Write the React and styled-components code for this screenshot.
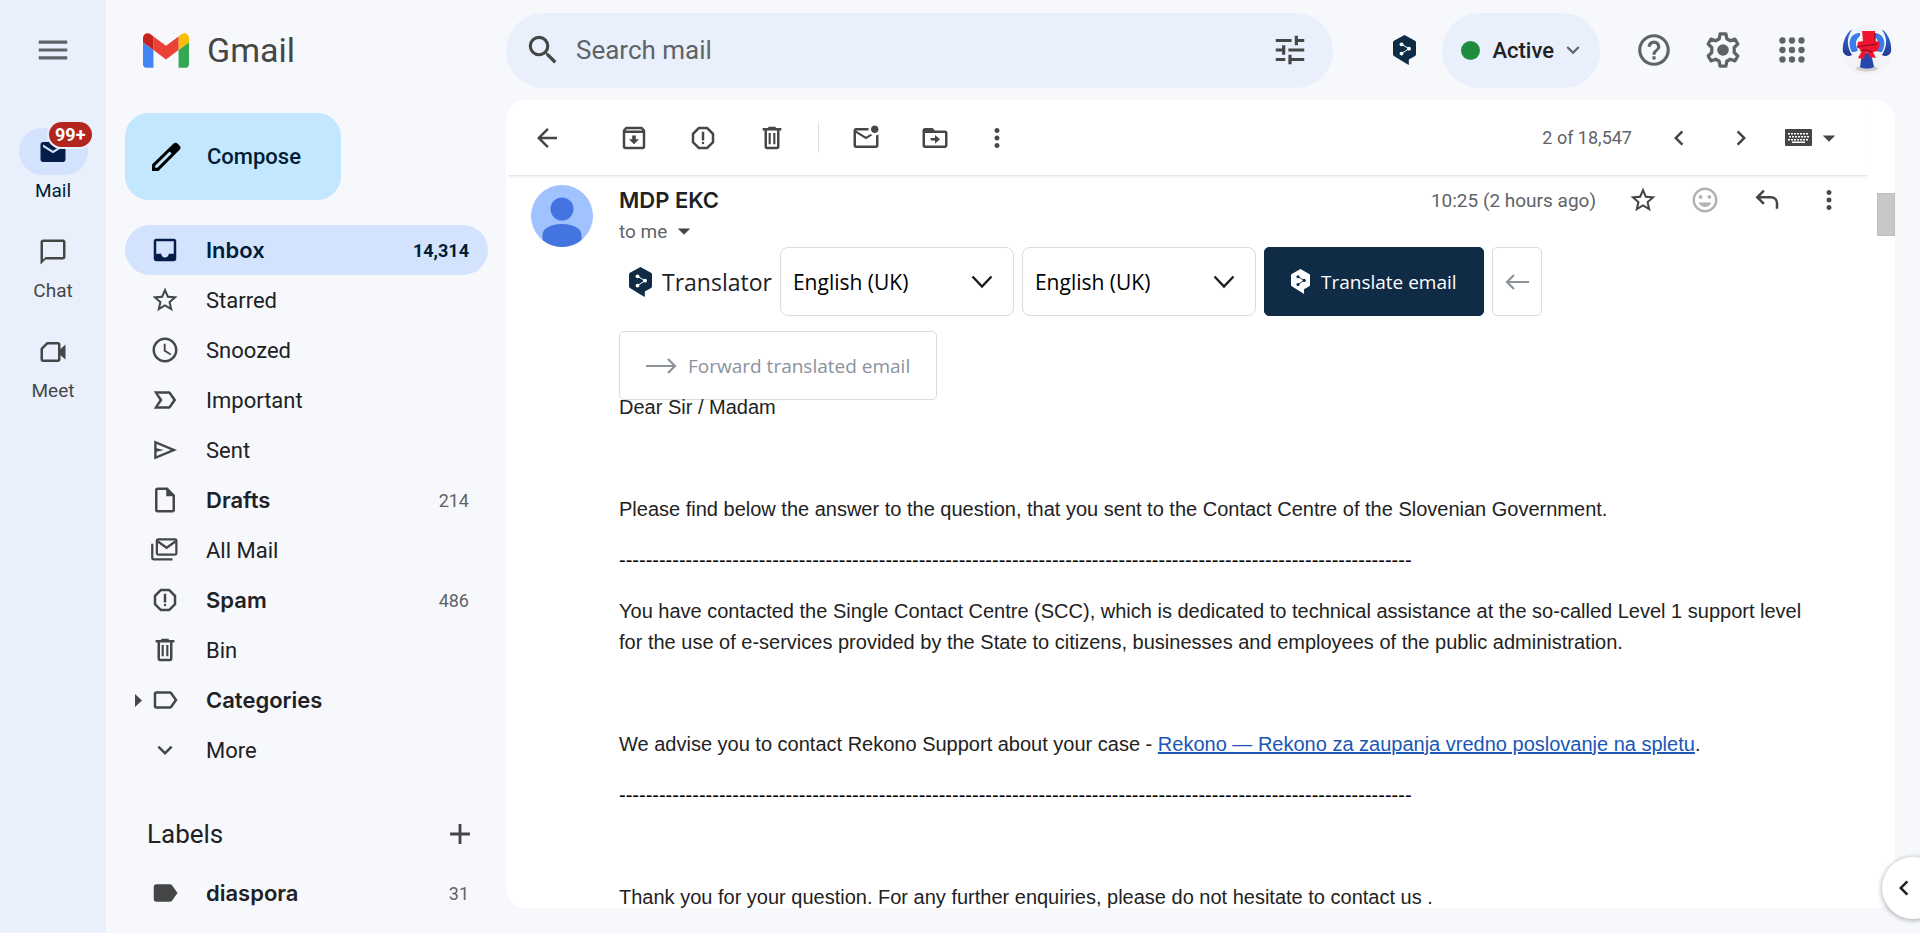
import React from "react";
import styled, { createGlobalStyle, css } from "styled-components";
import {
  MdAccessTime,
  MdAdd,
  MdArrowBack,
  MdArrowDropDown,
  MdChatBubbleOutline,
  MdChevronLeft,
  MdChevronRight,
  MdHelpOutline,
  MdInbox,
  MdKeyboardArrowDown,
  MdLabel,
  MdLabelImportantOutline,
  MdLabelOutline,
  MdMail,
  MdMenu,
  MdMoreVert,
  MdOutlineArchive,
  MdOutlineInsertDriveFile,
  MdOutlineMarkEmailUnread,
  MdOutlineReport,
  MdSearch,
  MdStarBorder,
  MdTagFaces,
  MdTune
} from "react-icons/md";

const GlobalStyle = createGlobalStyle`
  * {
    box-sizing: border-box;
  }
  body {
    margin: 0;
    background: #f6f8fc;
    color: #202124;
    font-family: Roboto, "Liberation Sans", sans-serif;
    font-size: 22px;
    overflow: hidden;
  }
  button, input, select {
    font: inherit;
    color: inherit;
  }
  a {
    color: inherit;
    text-decoration: none;
  }
  svg {
    display: block;
    flex-shrink: 0;
  }
`;

/* ---------- icons ---------- */

const MeetIcon = () => (
  <svg width="30" height="30" viewBox="0 0 24 24" fill="currentColor">
    <path d="M16 4H7L2 9v9c0 1.100.9 2 2 2h12c1.100 0 2-.9 2-2v-3.500l4 3.500V6l-4 3.500V6c0-1.100-.9-2-2-2zm0 14H4V9.800L7.800 6H16v12z" />
  </svg>
);

const SentIcon = () => (
  <svg width="30" height="30" viewBox="0 0 25 25" fill="currentColor">
    <path d="M3.500 20.500v-16l19 8zm2-3l11.850-5-11.850-5v3.500l6 1.500-6 1.500z" />
  </svg>
);

const AllMailIcon = () => (
  <svg width="30" height="30" viewBox="0 0 24 24" fill="none" stroke="currentColor" strokeWidth="1.800">
    <rect x="5.500" y="3.400" width="15.600" height="12.200" rx="1" />
    <path d="M6 5l7.300 5.200L20.600 5" />
    <path d="M1.800 7v11.400a1 1 0 0 0 1 1H18" />
  </svg>
);

const BinIcon = () => (
  <svg width="30" height="30" viewBox="0 0 24 24" fill="currentColor">
    <path d="M15 4V3H9v1H4.500v2H6v13c0 1.100.9 2 2 2h8c1.100 0 2-.9 2-2V6h1.500V4H15zm1 15H8V6h8v13z" />
    <path d="M9.300 8h1.700v9H9.300zM13 8h1.700v9H13z" />
  </svg>
);

const MoveIcon = () => (
  <svg width="30" height="30" viewBox="0 0 24 24" fill="currentColor">
    <path d="M20 6h-8l-2-2H4c-1.100 0-2 .9-2 2v12c0 1.100.9 2 2 2h16c1.100 0 2-.9 2-2V8c0-1.100-.9-2-2-2zm0 12H4V8h16z" />
    <path d="M12 16.500v-2.500H8.500v-2H12V9.500l4 3.500z" />
  </svg>
);

const PenIcon = () => (
  <svg width="30" height="30" viewBox="0 0 30 30" fill="#000">
    <path d="M22.600 1.600 1 22.600V29h6.400L28.400 8c1.500-1.500 1.500-3 0-4.400l-1.900-2c-1.300-1.300-2.700-1.200-3.900 0zM6.300 25.800H4.200v-2L18.600 9.400l2 2z" />
  </svg>
);

const ReplyIcon = () => (
  <svg width="30" height="30" viewBox="0 0 24 24" fill="none" stroke="currentColor" strokeWidth="2">
    <path d="M9.500 4.500 4.200 9.800l5.300 5.300M4.500 9.800H15c3 0 5 2 5 5V19" />
  </svg>
);

const GearIcon = () => (
  <svg width="38" height="38" viewBox="1.500 1.500 21 21">
    <path
      d="M10.400 3.100h3.200l.5 2.700 1.900 1.100 2.600-.9 1.600 2.700-2 1.900v2.800l2 1.900-1.600 2.700-2.600-.9-1.900 1.100-.5 2.700h-3.200l-.5-2.700L8 17.100l-2.600.9-1.600-2.700 2-1.900v-2.800l-2-1.900L5.400 6l2.600.9 1.900-1.100z"
      fill="none"
      stroke="currentColor"
      strokeWidth="1.800"
      strokeLinejoin="round"
    />
    <circle cx="12" cy="12" r="3.200" fill="currentColor" />
  </svg>
);

const AppsIcon = () => (
  <svg width="38" height="38" viewBox="0 0 24 24" fill="currentColor">
    {[6, 12, 18].map(y => [6, 12, 18].map(x => <circle key={`${x}-${y}`} cx={x} cy={y} r="2" />))}
  </svg>
);

const KeyboardIcon = () => (
  <svg width="27" height="17" viewBox="0 0 27 17">
    <rect width="27" height="17" rx="1" fill="#444746" />
    {[4, 7, 10].map(y =>
      [3, 6, 9, 12, 15, 18, 21].map(x => (
        <rect key={`${x}-${y}`} x={x + (y === 7 ? 1 : 0)} y={y} width="2" height="1.500" fill="#fff" />
      ))
    )}
    <rect x="7" y="12.500" width="13" height="1.500" fill="#fff" />
  </svg>
);

const HexIcon = ({ width, fill = "#0f2b46", dots = "#fff" }) => (
  <svg width={width} height={Math.round(width * 1.3)} viewBox="0 0 23 30">
    <path
      d="M11.500 0 22 5.800c.7.400 1 .9 1 1.600v11.900c0 .7-.3 1.200-.9 1.600L15.800 24.500V30l-5.200-3.100L.9 20.900c-.6-.4-.9-.9-.9-1.600V7.400c0-.7.3-1.200.9-1.600z"
      fill={fill}
    />
    <path d="M8.500 9.300 16 13.700 8.500 18.600" fill="none" stroke={dots} strokeWidth="1" />
    <circle cx="8.500" cy="9.300" r="1.900" fill={dots} />
    <circle cx="16" cy="13.700" r="1.900" fill={dots} />
    <circle cx="8.500" cy="18.600" r="1.900" fill={dots} />
  </svg>
);

const GmailLogo = () => (
  <svg width="46" height="35" viewBox="52 42 88 66">
    <path fill="#4285f4" d="M58 108h14V74L52 59v43c0 3.320 2.690 6 6 6" />
    <path fill="#34a853" d="M120 108h14c3.320 0 6-2.690 6-6V59l-20 15" />
    <path fill="#fbbc04" d="M120 48v26l20-15v-8c0-7.420-8.470-11.650-14.400-7.200" />
    <path fill="#ea4335" d="M72 74V48l24 18 24-18v26L96 92" />
    <path fill="#c5221f" d="M52 51v8l20 15V48l-5.600-4.200c-5.940-4.450-14.400-.22-14.400 7.200" />
  </svg>
);

const PersonAvatar = () => (
  <svg width="62" height="62" viewBox="0 0 62 62">
    <circle cx="31" cy="31" r="31" fill="#a0c3ff" />
    <circle cx="31" cy="24" r="11.500" fill="#4374e0" />
    <path d="M11.500 55v-5c0-7 9-11 19.500-11s19.500 4 19.500 11v5A31 31 0 0 1 31 62a31 31 0 0 1-19.500-7z" fill="#4374e0" />
  </svg>
);

const UserPicture = () => (
  <svg width="50" height="50" viewBox="0 0 50 50">
    <defs>
      <linearGradient id="blue" x1="0" y1="0" x2="0" y2="1">
        <stop offset="0" stopColor="#2f6fe0" />
        <stop offset="1" stopColor="#22398f" />
      </linearGradient>
    </defs>
    <circle cx="25" cy="25" r="25" fill="#f3f3f5" />
    <ellipse cx="25" cy="43.500" rx="11" ry="3" fill="#d3cdd2" />
    <path d="M9 5C3 10 0 19 1 27c2 4 6 5 9 3C5 22 4 13 10 5zM41 5c6 5 9 14 8 22-2 4-6 5-9 3 5-8 6-17 0-25z" fill="url(#blue)" />
    <path d="M18 8C8 8 5 18 10 27c2 0 4 0 6-2-3-5-3-10 2-14zM32 8c10 0 13 10 8 19-2 0-4 0-6-2 3-5 3-10-2-14z" fill="#3b7ce8" />
    <path d="M20 28h9l3 14c-4 2-10 2-14 0z" fill="#2848ad" />
    <path d="M20 6h13v10l5 1-2 9-5 1 3 6-6-1-3-5-4 7-5-1 4-7-5-4 1-5 5-1z" fill="#f0142f" />
    <path d="M15 22l20-3M18 26l6-1 6 2M33 8v8" stroke="#7d0d1c" strokeWidth="1.200" fill="none" />
  </svg>
);

const LongArrow = ({ width, back }) => (
  <svg width={width} height="16" viewBox={`0 0 ${width} 16`} fill="none" stroke="#8a929c" strokeWidth="2.200">
    {back ? (
      <path d={`M9 1 2 8l7 7M2 8h${width - 2}`} />
    ) : (
      <path d={`M${width - 9} 1l7 7-7 7M${width - 2} 8H0`} />
    )}
  </svg>
);

/* ---------- shell ---------- */

const Page = styled.div`
  display: flex;
  height: 100vh;
  overflow: hidden;
`;

const Rail = styled.nav`
  display: flex;
  flex-direction: column;
  align-items: center;
  width: 106px;
  flex-shrink: 0;
  background: #e9f0fb;
  color: #444746;
`;

const IconButton = styled.button`
  display: flex;
  align-items: center;
  justify-content: center;
  padding: 0;
  border: 0;
  background: none;
  color: ${props => props.$color || "#444746"};
  cursor: pointer;
`;

const RailMenu = styled(IconButton)`
  height: 100px;
  margin-bottom: 28px;
`;

const RailItem = styled.a`
  display: flex;
  flex-direction: column;
  align-items: center;
  height: 100px;
  font-size: 19px;
  line-height: 31px;
  color: ${props => (props.$active ? "#001d35" : "#444746")};
`;

const RailPill = styled.span`
  position: relative;
  display: flex;
  align-items: center;
  justify-content: center;
  width: 69px;
  height: 47px;
  border-radius: 24px;
  background: ${props => (props.$active ? "#d3e3fd" : "transparent")};
`;

const Badge = styled.span`
  position: absolute;
  top: -8px;
  right: -6px;
  padding: 0 6px;
  border: 2px solid #e9f0fb;
  border-radius: 15px;
  background: #b3261e;
  color: #fff;
  font-size: 18px;
  font-weight: 700;
  line-height: 25px;
`;

const Content = styled.div`
  display: flex;
  flex-direction: column;
  flex: 1;
  min-width: 0;
`;

const TopBar = styled.header`
  display: flex;
  align-items: center;
  height: 100px;
  flex-shrink: 0;
  padding-right: 28px;
`;

const Brand = styled.a`
  display: flex;
  align-items: center;
  gap: 18px;
  width: 400px;
  flex-shrink: 0;
  padding-left: 37px;
  color: #444746;
  font-size: 34px;
`;

const SearchBar = styled.form`
  display: flex;
  align-items: center;
  gap: 14px;
  flex: 1;
  height: 75px;
  padding: 0 24px 0 18px;
  border-radius: 38px;
  background: #e9f0fb;
`;

const SearchInput = styled.input`
  flex: 1;
  min-width: 0;
  padding: 0;
  border: 0;
  outline: 0;
  background: none;
  font-size: 26px;
  &::placeholder {
    color: #5f6368;
    opacity: 1;
  }
`;

const TopActions = styled.div`
  display: flex;
  align-items: center;
  gap: 31px;
  margin-left: 35px;
`;

const StatusButton = styled.button`
  display: flex;
  align-items: center;
  gap: 12px;
  height: 75px;
  margin-left: 26px;
  padding: 0 14px 0 19px;
  border: 0;
  border-radius: 38px;
  background: #e9f0fb;
  font-weight: 500;
`;

const StatusDot = styled.span`
  width: 19px;
  height: 19px;
  border-radius: 50%;
  background: #1e8e3e;
`;

const StatusText = styled.span`
  display: flex;
  align-items: center;
  gap: 6px;
`;

const Extension = styled(IconButton)`
  margin-left: 60px;
`;

const Columns = styled.div`
  display: flex;
  flex: 1;
  min-height: 0;
`;

/* ---------- sidebar ---------- */

const Sidebar = styled.aside`
  width: 400px;
  flex-shrink: 0;
  padding: 13px 18px 0 19px;
`;

const Compose = styled.button`
  display: flex;
  align-items: center;
  gap: 26px;
  height: 87px;
  margin-bottom: 25px;
  padding: 0 40px 0 26px;
  border: 0;
  border-radius: 24px;
  background: #c2e7ff;
  color: #001d35;
  font-weight: 500;
`;

const FolderList = styled.ul`
  margin: 0;
  padding: 0;
  list-style: none;
`;

const boldLabel = css`
  font-family: Inter, Roboto, sans-serif;
  font-size: 22px;
  font-weight: 600;
`;

const FolderLink = styled.a`
  display: flex;
  align-items: center;
  height: 50px;
  padding-right: 19px;
  border-radius: 25px;
  background: ${props => (props.$active ? "#d3e3fd" : "transparent")};
  color: ${props => (props.$active ? "#001d35" : "#202124")};
  svg {
    color: ${props => (props.$active ? "#041e49" : "#444746")};
  }
`;

const FolderExpander = styled.span`
  display: flex;
  justify-content: flex-end;
  width: 25px;
  padding-right: 8px;
`;

const FolderName = styled.span`
  flex: 1;
  padding-left: 26px;
  ${props => props.$bold && boldLabel}
`;

const FolderCount = styled.span`
  color: ${props => (props.$active ? "#001d35" : "#5f6368")};
  font-size: 18px;
  font-weight: ${props => (props.$active ? 700 : 400)};
`;

const LabelsHeader = styled.div`
  display: flex;
  align-items: center;
  justify-content: space-between;
  height: 50px;
  margin: 34px 0 9px;
  padding: 0 11px 0 22px;
`;

const LabelsTitle = styled.h2`
  margin: 0;
  font-size: 26px;
  font-weight: 400;
`;

/* ---------- mail card ---------- */

const Card = styled.main`
  display: flex;
  flex-direction: column;
  flex: 1;
  min-width: 0;
  margin: 0 25px 25px 0;
  border-radius: 20px;
  background: #fff;
  overflow: hidden;
`;

const Toolbar = styled.div`
  display: flex;
  align-items: center;
  height: 76px;
  flex-shrink: 0;
  margin: 0 28px 0 2px;
  padding: 0 23px 0 24px;
  border-bottom: 1px solid #e4e6e8;
  box-shadow: 0 2px 2px -1px rgba(0, 0, 0, 0.08);
`;

const ToolGroup = styled.div`
  display: flex;
  align-items: center;
  gap: ${props => props.$gap}px;
`;

const Separator = styled.span`
  width: 1px;
  height: 31px;
  margin: 0 32px 0 31px;
  background: #dfe2e5;
`;

const Pager = styled.div`
  display: flex;
  align-items: center;
  gap: 32px;
  margin-left: auto;
  color: #5f6368;
  font-size: 18px;
`;

const InputTools = styled(IconButton)`
  margin-left: -3px;
  gap: 2px;
`;

const Scroller = styled.div`
  display: flex;
  flex: 1;
  min-height: 0;
`;

const Message = styled.article`
  display: flex;
  align-items: flex-start;
  gap: 26px;
  flex: 1;
  min-width: 0;
  padding: 9px 33px 0 25px;
`;

const MessageMain = styled.div`
  flex: 1;
  min-width: 0;
`;

const MessageHeader = styled.div`
  display: flex;
  align-items: center;
  justify-content: space-between;
  height: 30px;
`;

const Sender = styled.h3`
  margin: 0;
  ${boldLabel}
`;

const HeaderActions = styled.div`
  display: flex;
  align-items: center;
  gap: 32px;
  color: #5f6368;
  font-size: 19px;
`;

const Recipient = styled.button`
  display: flex;
  align-items: center;
  gap: 2px;
  height: 32px;
  padding: 0;
  border: 0;
  background: none;
  color: #5f6368;
  font-size: 19px;
`;

const TranslateBar = styled.div`
  display: flex;
  flex-wrap: wrap;
  align-items: center;
  gap: 15px 8px;
  font-family: "Open Sans", "Noto Sans", sans-serif;
  font-size: 19px;
`;

const TranslateBrand = styled.div`
  display: flex;
  align-items: center;
  gap: 10px;
  padding-left: 10px;
  font-size: 23px;
`;

const SelectBox = styled.div`
  display: grid;
  align-items: center;
  width: 234px;
  height: 69px;
  border: 1px solid #dadce0;
  border-radius: 8px;
  select,
  svg {
    grid-area: 1 / 1;
  }
  svg {
    justify-self: end;
    margin-right: 20px;
    pointer-events: none;
  }
`;

const LanguageSelect = styled.select`
  appearance: none;
  height: 100%;
  padding: 0 12px;
  border: 0;
  background: none;
  color: #000;
  font-size: 21px;
`;

const TranslateButton = styled.button`
  display: flex;
  align-items: center;
  gap: 11px;
  height: 69px;
  padding: 0 26px;
  border: 1px solid ${props => (props.$primary ? "#0f2b46" : "#dadce0")};
  border-radius: 5px;
  background: ${props => (props.$primary ? "#0f2b46" : "#fff")};
  color: ${props => (props.$primary ? "#fff" : "#8a929c")};
`;

const BackButton = styled(TranslateButton)`
  padding: 0 12px;
`;

const Body = styled.div`
  margin-top: -8px;
  padding-right: 20px;
  color: #222;
  font-family: "Liberation Sans", Arial, sans-serif;
  font-size: 20px;
  line-height: 31px;
  p {
    min-height: 31px;
    margin: 0 0 20px;
  }
  a {
    color: #1a56b8;
    text-decoration: underline;
  }
`;

const Dashes = styled.p`
  color: #000;
  white-space: nowrap;
`;

const Scrollbar = styled.div`
  width: 18px;
  padding-top: 17px;
`;

const Thumb = styled.div`
  height: 43px;
  border: 1px solid #bdbdbd;
  background: #c8c8c8;
`;

const SidePanelToggle = styled.button`
  position: fixed;
  right: -24px;
  bottom: 14px;
  display: flex;
  align-items: center;
  width: 62px;
  height: 62px;
  padding: 0 0 0 7px;
  border: 0;
  border-radius: 31px;
  background: #fff;
  color: #1f1f1f;
  box-shadow: 0 1px 4px 1px rgba(60, 64, 67, 0.35);
`;

/* ---------- data ---------- */

const folders = [
  { name: "Inbox", icon: <MdInbox size={30} />, count: "14,314", bold: true, active: true },
  { name: "Starred", icon: <MdStarBorder size={30} /> },
  { name: "Snoozed", icon: <MdAccessTime size={30} /> },
  { name: "Important", icon: <MdLabelImportantOutline size={30} /> },
  { name: "Sent", icon: <SentIcon /> },
  { name: "Drafts", icon: <MdOutlineInsertDriveFile size={30} />, count: "214", bold: true },
  { name: "All Mail", icon: <AllMailIcon /> },
  { name: "Spam", icon: <MdOutlineReport size={30} />, count: "486", bold: true },
  { name: "Bin", icon: <BinIcon /> },
  { name: "Categories", icon: <MdLabelOutline size={30} />, bold: true, expandable: true },
  { name: "More", icon: <MdKeyboardArrowDown size={30} /> }
];

const labels = [{ name: "diaspora", icon: <MdLabel size={30} />, count: "31", bold: true }];

const dashes = "-".repeat(119);

/* ---------- components ---------- */

const Folder = ({ name, icon, count, bold, active, expandable }) => (
  <li>
    <FolderLink href="#" $active={active}>
      <FolderExpander>
        {expandable && (
          <svg width="7" height="13" viewBox="0 0 7 13" fill="currentColor">
            <path d="M0 0l7 6.500L0 13z" />
          </svg>
        )}
      </FolderExpander>
      {icon}
      <FolderName $bold={bold}>{name}</FolderName>
      {count && <FolderCount $active={active}>{count}</FolderCount>}
    </FolderLink>
  </li>
);

const Language = ({ label }) => (
  <SelectBox>
    <LanguageSelect aria-label={label} defaultValue="en-GB">
      <option value="en-GB">English (UK)</option>
      <option value="sl">Slovenian</option>
    </LanguageSelect>
    <svg width="22" height="14" viewBox="0 0 22 14" fill="none" stroke="#1b1b1b" strokeWidth="2.400">
      <path d="M1.500 1.500 11 11.500l9.500-10" />
    </svg>
  </SelectBox>
);

const MailRail = () => (
  <Rail>
    <RailMenu aria-label="Main menu" $color="#5f6368">
      <MdMenu size={38} />
    </RailMenu>
    <RailItem href="#" $active>
      <RailPill $active>
        <MdMail size={30} color="#041e49" />
        <Badge>99+</Badge>
      </RailPill>
      Mail
    </RailItem>
    <RailItem href="#">
      <RailPill>
        <MdChatBubbleOutline size={30} />
      </RailPill>
      Chat
    </RailItem>
    <RailItem href="#">
      <RailPill>
        <MeetIcon />
      </RailPill>
      Meet
    </RailItem>
  </Rail>
);

const Header = () => (
  <TopBar>
    <Brand href="#">
      <GmailLogo />
      Gmail
    </Brand>
    <SearchBar>
      <IconButton type="button" aria-label="Search">
        <MdSearch size={38} />
      </IconButton>
      <SearchInput type="text" placeholder="Search mail" aria-label="Search mail" />
      <IconButton type="button" aria-label="Show search options">
        <MdTune size={38} />
      </IconButton>
    </SearchBar>
    <Extension aria-label="Translator">
      <HexIcon width={23} />
    </Extension>
    <StatusButton>
      <StatusDot />
      <StatusText>
        Active
        <MdKeyboardArrowDown size={26} color="#5f6368" />
      </StatusText>
    </StatusButton>
    <TopActions>
      <IconButton aria-label="Support" $color="#5f6368">
        <MdHelpOutline size={38} />
      </IconButton>
      <IconButton aria-label="Settings" $color="#5f6368">
        <GearIcon />
      </IconButton>
      <IconButton aria-label="Apps" $color="#5f6368">
        <AppsIcon />
      </IconButton>
      <IconButton aria-label="Account">
        <UserPicture />
      </IconButton>
    </TopActions>
  </TopBar>
);

const MailToolbar = () => (
  <Toolbar>
    <ToolGroup $gap={57}>
      <IconButton aria-label="Back to Inbox">
        <MdArrowBack size={30} />
      </IconButton>
      <ToolGroup $gap={39}>
        <IconButton aria-label="Archive">
          <MdOutlineArchive size={30} />
        </IconButton>
        <IconButton aria-label="Report spam">
          <MdOutlineReport size={30} />
        </IconButton>
        <IconButton aria-label="Delete">
          <BinIcon />
        </IconButton>
      </ToolGroup>
    </ToolGroup>
    <Separator />
    <ToolGroup $gap={32}>
      <ToolGroup $gap={39}>
        <IconButton aria-label="Mark as unread">
          <MdOutlineMarkEmailUnread size={30} />
        </IconButton>
        <IconButton aria-label="Move to">
          <MoveIcon />
        </IconButton>
      </ToolGroup>
      <IconButton aria-label="More">
        <MdMoreVert size={30} />
      </IconButton>
    </ToolGroup>
    <Pager>
      2 of 18,547
      <IconButton aria-label="Newer">
        <MdChevronLeft size={30} />
      </IconButton>
      <IconButton aria-label="Older">
        <MdChevronRight size={30} />
      </IconButton>
      <InputTools aria-label="Input tools">
        <KeyboardIcon />
        <MdArrowDropDown size={30} />
      </InputTools>
    </Pager>
  </Toolbar>
);

const Translator = () => (
  <TranslateBar>
    <TranslateBrand>
      <HexIcon width={23} />
      Translator
    </TranslateBrand>
    <Language label="Translate from" />
    <Language label="Translate to" />
    <TranslateButton $primary>
      <HexIcon width={19} fill="#fff" dots="#0f2b46" />
      Translate email
    </TranslateButton>
    <BackButton aria-label="Show original">
      <LongArrow width={24} back />
    </BackButton>
    <TranslateButton>
      <LongArrow width={31} />
      Forward translated email
    </TranslateButton>
  </TranslateBar>
);

export class App extends React.Component {
  render() {
    return (
      <Page>
        <GlobalStyle />
        <MailRail />
        <Content>
          <Header />
          <Columns>
            <Sidebar>
              <Compose>
                <PenIcon />
                Compose
              </Compose>
              <FolderList>
                {folders.map(folder => (
                  <Folder key={folder.name} {...folder} />
                ))}
              </FolderList>
              <LabelsHeader>
                <LabelsTitle>Labels</LabelsTitle>
                <IconButton aria-label="Create new label">
                  <MdAdd size={34} />
                </IconButton>
              </LabelsHeader>
              <FolderList>
                {labels.map(label => (
                  <Folder key={label.name} {...label} />
                ))}
              </FolderList>
            </Sidebar>
            <Card>
              <MailToolbar />
              <Scroller>
                <Message>
                  <PersonAvatar />
                  <MessageMain>
                    <MessageHeader>
                      <Sender>MDP EKC</Sender>
                      <HeaderActions>
                        10:25 (2 hours ago)
                        <IconButton aria-label="Star">
                          <MdStarBorder size={30} />
                        </IconButton>
                        <IconButton aria-label="Add reaction" $color="#b0b2b4">
                          <MdTagFaces size={30} />
                        </IconButton>
                        <IconButton aria-label="Reply">
                          <ReplyIcon />
                        </IconButton>
                        <IconButton aria-label="More">
                          <MdMoreVert size={30} />
                        </IconButton>
                      </HeaderActions>
                    </MessageHeader>
                    <Recipient>
                      to me
                      <MdArrowDropDown size={30} color="#444746" />
                    </Recipient>
                    <Translator />
                    <Body>
                      <p>Dear Sir / Madam</p>
                      <p />
                      <p>
                        Please find below the answer to the question, that you sent to the Contact Centre of the
                        Slovenian Government.
                      </p>
                      <Dashes>{dashes}</Dashes>
                      <p>
                        You have contacted the Single Contact Centre (SCC), which is dedicated to technical
                        assistance at the so-called Level 1 support level for the use of e-services provided by the
                        State to citizens, businesses and employees of the public administration.
                      </p>
                      <p />
                      <p>
                        We advise you to contact Rekono Support about your case -{" "}
                        <a href="#">Rekono — Rekono za zaupanja vredno poslovanje na spletu</a>.
                      </p>
                      <Dashes>{dashes}</Dashes>
                      <p />
                      <p>
                        Thank you for your question. For any further enquiries, please do not hesitate to contact us
                        .
                      </p>
                    </Body>
                  </MessageMain>
                </Message>
                <Scrollbar>
                  <Thumb />
                </Scrollbar>
              </Scroller>
            </Card>
          </Columns>
        </Content>
        <SidePanelToggle aria-label="Show side panel">
          <MdChevronLeft size={30} />
        </SidePanelToggle>
      </Page>
    );
  }
}

export default App;
